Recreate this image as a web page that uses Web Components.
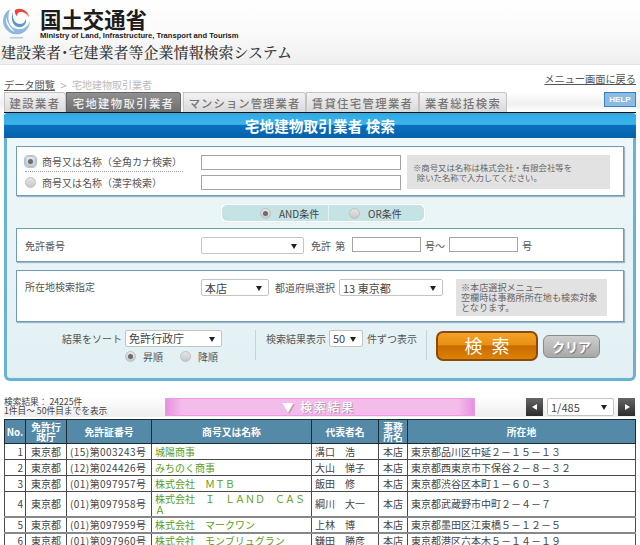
<!DOCTYPE html>
<html lang="ja"><head><meta charset="utf-8"><title>建設業者・宅建業者等企業情報検索システム</title>
<style>
html,body{margin:0;padding:0;background:#fff}
body{width:640px;height:545px;overflow:hidden;font-family:"Noto Sans CJK JP","Noto Sans",sans-serif;font-size:10px;color:#333}
</style></head><body>
<site-header></site-header>
<crumb-bar></crumb-bar>
<tab-bar></tab-bar>
<search-panel>
  <form-box h="48"><name-row></name-row></form-box>
  <cond-switch></cond-switch>
  <form-box h="32" style="margin-bottom:8px"><license-row></license-row></form-box>
  <form-box h="50"><place-row></place-row></form-box>
  <sort-row></sort-row>
</search-panel>
<result-bar></result-bar>
<result-table></result-table>
<script>
const def=(name,css,html)=>customElements.define(name,class extends HTMLElement{
  connectedCallback(){ if(this.shadowRoot)return; const s=this.attachShadow({mode:'open'});
    s.innerHTML='<style>'+css+'</style>'+(typeof html==='function'?html(this):html);}
});
def('x-radio',`:host{display:inline-flex;align-items:center;gap:var(--g,6px)}
 i{display:block;flex:none;width:9px;height:9px;border-radius:50%;background:linear-gradient(#e6e6e6,#c8c8c8);border:1px solid #c0c0c0;position:relative}
 :host([on]) i::after{content:"";position:absolute;left:2px;top:2px;width:5px;height:5px;border-radius:50%;background:#6c6c6c}
 :host([focus]) i{outline:1px solid #a8c4ee;outline-offset:0;border-radius:3px}`,
 `<i></i><span><slot></slot></span>`);
def('x-select',`:host{display:inline-flex;flex:none;align-items:center;box-sizing:border-box;background:#fff;border:1px solid #c4c4c4;border-radius:2px;height:17px;padding:0 6px 0 3px;font-size:11px;color:#444;justify-content:space-between}
 b{font-size:0;border-left:3px solid transparent;border-right:3px solid transparent;border-top:5px solid #222;margin-top:1px}`,
 `<span><slot></slot></span><b></b>`);
def('x-input',`:host{display:block;flex:none;box-sizing:border-box;background:#fff;border:1px solid #a4a4a4;height:15px}`,``);
def('site-header',`:host{display:block;height:65px;background:linear-gradient(#fff 0,#fafafa 50%,#efefef 100%);border-bottom:1px solid #e4e4e4;box-sizing:border-box}
 .top{display:flex;padding:8px 0 0 2px;gap:8px;height:36px;box-sizing:border-box}
 svg{flex:none}
 .n{display:flex;flex-direction:column}
 .ja{font:700 21.4px/22px "Noto Sans CJK JP",sans-serif;color:#1c1c1c}
 .en{font:700 7.6px/9px "Liberation Sans",sans-serif;color:#222;margin-top:1px;white-space:nowrap}
 .t{font:500 15px/20px "Noto Serif CJK JP","Noto Sans CJK JP",serif;color:#333;padding:0 0 0 1px;margin-top:6px;white-space:nowrap}`,
 `<div class="top"><svg width="30" height="32" viewBox="0 0 30 32"><path d="M8 1A13.5 13.5 0 1 0 28 13C26 19 21 22 15 21 8 20 4 12 8 1z" fill="#8fb8de"/><path d="M11 4C10 11 13 16 18 16 21 16 23 14 24 11 25 16 21 20 16 19 11 18 8 11 11 4z" fill="#5a97cf"/><path d="M4 9C3 15 7 22 13 24 9 20 5 15 4 9z" fill="#fff"/><path d="M13 2C18-1 26 2 27 9 24 5 21 3.500 18 4 16 4.500 15 6 15 8 13 7 12.500 4 13 2z" fill="#e5473d"/><path d="M20 4C23 4.500 26 6 27 9 24 6 22 5 20 4z" fill="#f1b3ab"/><rect x="8" y="29" width="13" height="1.500" fill="#b5c9dc"/></svg>
 <div class="n"><div class="ja">国土交通省</div><div class="en">Ministry of Land, Infrastructure, Transport and Tourism</div></div></div>
 <div class="t">建設業者･宅建業者等企業情報検索システム</div>`);
def('crumb-bar',`:host{display:flex;height:27px;padding:0 4px;justify-content:space-between;font-size:10.2px;line-height:13px;color:#555;box-sizing:border-box}
 a{color:#555;text-decoration:underline}
 .l{padding-top:13px;display:flex;color:#bbb}
 .l span:nth-child(2){width:17px;text-align:center;font-size:12px}
 .l span:nth-child(3){font-size:10px}
 .r{padding-top:7px}`,
 `<div class="l"><a>データ閲覧</a><span>&gt;</span><span>宅地建物取引業者</span></div><div class="r"><a>メニュー画面に戻る</a></div>`);
def('tab-bar',`:host{display:flex;height:20px;padding:0 4px;box-sizing:border-box;background:linear-gradient(#fff,#f0f0f0 60%,#fff);align-items:flex-end}
 a{display:flex;align-items:center;justify-content:center;box-sizing:border-box;height:20px;background:linear-gradient(#f3f3f3,#d9d9d9);border:1px solid #c4c4c4;border-bottom:0;border-top-right-radius:3px;color:#777;font-size:11.3px;font-weight:500;letter-spacing:1.4px;white-space:nowrap}
 a.on{background:linear-gradient(#909090,#6f6f6f);color:#f0f0f0;border-color:#666}
 .h{margin-left:auto;align-self:flex-start;width:32px;height:15px;box-sizing:border-box;background:#8bbbe0;border:1px solid #3a7fc8;color:#fff;font:700 8px/13px "Liberation Sans",sans-serif;text-align:center}`,
 `<a style="width:62px">建設業者</a><a class="on" style="width:115px">宅地建物取引業者</a><a style="width:123px;margin-left:2px;letter-spacing:1.1px">マンション管理業者</a><a style="width:113px">賃貸住宅管理業者</a><a style="width:88px">業者総括検索</a><div class="h">HELP</div>`);
def('search-panel',`:host{display:block;margin:0 4px;width:632px;height:269px;box-sizing:border-box;border-top:1px solid #111}
 .t{height:25px;background:linear-gradient(#2fa9e4 0,#3fb4ea 45%,#0a72bf 50%,#0560a8 100%);color:#fff;font-weight:700;font-size:14.5px;line-height:25px;text-align:center;letter-spacing:.2px;border-radius:3px 3px 0 0}
 .b{height:243px;box-sizing:border-box;background:linear-gradient(#eef7fa,#e2f0f4);border:solid #68b3d3;border-width:0 3px 3px 3px;border-radius:0 0 6px 6px;padding:8px 9px 0}`,
 `<div class="t">宅地建物取引業者 検索</div><div class="b"><slot></slot></div>`);
def('form-box',`:host{display:block;background:#fff;border:1px solid #6f9db5;box-shadow:1px 1px 1px #9fb7c4}`,
 h=>`<style>:host{height:${h.getAttribute('h')}px}</style><slot></slot>`);
def('name-row',`:host{display:flex;height:100%;padding-left:8px;color:#555;font-size:10px}
 .c{width:176px;padding-top:4px}
 .r{height:20px;display:flex;align-items:center}
 .d{border-bottom:1px dotted #999;width:158px}
 .i{display:flex;flex-direction:column;gap:5px;padding-top:8px}
 x-input{width:200px}
 .n{margin:8px 0 0 6px;width:203px;height:34px;background:#e2e2e2;font-size:8.4px;line-height:10px;padding:7px 0 0 6px;box-sizing:border-box;color:#666;white-space:nowrap}`,
 `<div class="c"><div class="r"><x-radio on focus>商号又は名称（全角カナ検索）</x-radio></div><div class="d"></div><div class="r"><x-radio>商号又は名称（漢字検索）</x-radio></div></div>
 <div class="i"><x-input></x-input><x-input></x-input></div>
 <div class="n">※商号又は名称は株式会社・有限会社等を<br>&nbsp;&nbsp;除いた名称で入力してください。</div>`);
def('cond-switch',`:host{display:block;width:206px;height:20px;margin:7px 0 5px 204px;box-sizing:border-box;padding:1px;background:#fff;border-radius:6px;border:1px solid #e8f2f5}
 .i{display:flex;height:100%;background:#c5e2e5;border-radius:5px;color:#444;font-size:10px;--g:8px}
 .i>div{display:flex;align-items:center;box-sizing:border-box}
 .i>div:first-child{width:106px;padding-left:38px}
 .i>div+div{flex:1;border-left:1px solid #e4f0f2;padding-left:20px}`,
 `<div class="i"><div><x-radio on>AND条件</x-radio></div><div><x-radio>OR条件</x-radio></div></div>`);
def('license-row',`:host{display:flex;height:100%;box-sizing:border-box;padding:8px 0 0 8px;color:#555;font-size:10px;line-height:17px;white-space:nowrap}
 .l{width:176px}
 x-input{width:69px}
 x-select{width:103px}
 .a{margin-left:7px;width:41px;word-spacing:2px}
 .g{margin:0 4px;width:20px}`,
 `<div class="l">免許番号</div><x-select></x-select><span class="a">免許 第</span><x-input></x-input><span class="g">号～</span><x-input></x-input><span class="g">号</span>`);
def('place-row',`:host{display:flex;height:100%;padding-left:8px;color:#555;font-size:10px;white-space:nowrap}
 .l{width:176px;padding-top:8px;line-height:16px}
 .a{display:flex;align-items:flex-start;padding-top:8px}
 .a span{margin:0 4px 0 6px;line-height:17px}
 .n{margin:8px 0 0 13px;width:151px;height:37px;background:#e2e2e2;font-size:9.1px;line-height:10px;padding:3px 0 0 5px;box-sizing:border-box;color:#666;white-space:nowrap}`,
 `<div class="l">所在地検索指定</div><div class="a"><x-select style="width:68px">本店</x-select><span>都道府県選択</span><x-select style="width:104px">13 東京都</x-select></div>
 <div class="n">※本店選択メニュー<br>空欄時は事務所所在地も検索対象<br>となります。</div>`);
def('sort-row',`:host{display:flex;height:42px;margin-top:8px;color:#555;font-size:10px;white-space:nowrap}
 .s{flex:none;width:240px;box-sizing:border-box;padding-left:46px;border-right:1px solid #c3d3d8;height:30px}
 .s1{display:flex;gap:3px;align-items:center;line-height:17px}
 .s2{display:flex;gap:17px;padding:1px 0 0 63px;--g:7px;line-height:17px}
 .m{flex:none;display:flex;gap:3px;align-items:flex-start;width:171px;box-sizing:border-box;padding-left:10px;border-right:1px solid #c3d3d8;height:30px;line-height:17px}
 .go{flex:none;width:102px;height:30px;box-sizing:border-box;margin:1px 0 0 9px;background:linear-gradient(#f4a02a,#e8900f 45%,#c86a00 50%,#de8200);border:2px solid #8a4a08;border-radius:7px;color:#fff;font-size:18px;line-height:25px;text-align:center;letter-spacing:9px;padding-left:9px;font-weight:400}
 .cl{flex:none;width:57px;height:23px;box-sizing:border-box;margin:5px 0 0 5px;background:linear-gradient(#cfcfcf,#a8a8a8);border:1px solid #8a8a8a;border-radius:6px;color:#fff;font-size:13px;line-height:21px;text-align:center;font-weight:700;text-shadow:1px 1px 1px #777}`,
 `<div class="s"><div class="s1">結果をソート<x-select style="width:97px">免許行政庁</x-select></div><div class="s2"><x-radio on>昇順</x-radio><x-radio>降順</x-radio></div></div>
 <div class="m"><span>検索結果表示</span><x-select style="width:34px">50</x-select><span style="margin-left:1px">件ずつ表示</span></div>
 <div class="go">検索</div><div class="cl">クリア</div>`);
def('result-bar',`:host{display:flex;height:21px;margin:15px 4px 0;width:632px;box-sizing:border-box;background:linear-gradient(#fff,#eee);color:#444}
 .c{flex:none;width:161px;font-size:8.7px;line-height:9px;padding-top:1px;white-space:nowrap}
 .p{flex:none;width:310px;height:18px;margin-top:2px;box-sizing:border-box;background:linear-gradient(90deg,#e98fe0,#f3bcea 5%,#f3bcea 95%,#e98fe0);border:1px solid #ee9be6;color:#fff;font-size:12px;font-weight:500;line-height:16px;text-align:center;letter-spacing:1.7px;text-shadow:1px 1px 1px #a78aa5;padding-right:3px}
 .n{margin-left:auto;display:flex;gap:4px;margin-right:1px;margin-top:2px}
 .bt{width:17px;height:18px;background:linear-gradient(#666,#2c2c2c);display:flex;align-items:center;justify-content:center}
 .bt i{display:block;border:3px solid transparent}
 x-select{width:67px;height:18px}`,
 `<div class="c">検索結果： 24225件<br>1件目～ 50件目までを表示</div><div class="p">▼ 検索結果</div>
 <div class="n"><div class="bt"><i style="border-right:5px solid #fff;margin-left:-4px"></i></div><x-select>1/485</x-select><div class="bt"><i style="border-left:5px solid #fff;margin-right:-4px"></i></div></div>`);
const rows=[
 [1,'(15)第003243号','城陽商事','溝口　浩','東京都品川区中延２－１５－１３',16],
 [2,'(12)第024426号','みちのく商事','大山　悌子','東京都西東京市下保谷２－８－３２',16],
 [3,'(01)第097957号','株式会社　ＭＴＢ','飯田　修','東京都渋谷区本町１－６０－３',16],
 [4,'(01)第097958号','株式会社　Ｉ　ＬＡＮＤ　ＣＡＳＡ','綱川　大一','東京都武蔵野市中町２－４－７',25],
 [5,'(01)第097959号','株式会社　マークワン','上林　博','東京都墨田区江東橋５－１２－５',16],
 [6,'(01)第097960号','株式会社　モンブリュグラン','鎌田　勝彦','東京都港区六本木５－１４－１９',15]];
def('result-table',`:host{display:block;margin:2px 4px 0;width:632px}
 table{border-collapse:collapse;table-layout:fixed;width:632px;font-size:10px;color:#444;border:1px solid #222}
 th,td{border:1px solid #4a4a4a;padding:0 3px;overflow:hidden;white-space:nowrap;box-sizing:border-box}
 th{background:#5489a8;color:#fff;font-size:9.8px;font-weight:700;height:24px;line-height:10px;border-color:#1c2a33;white-space:normal;padding:0 3px}
 td{line-height:11px}
 td.r{text-align:right;padding-right:2px}
 td.c{text-align:center;padding:0}
 td.l{letter-spacing:.45px}
 td.g{color:#5c9c22;white-space:normal;word-break:break-all}
 tr.k td{border-top:2px solid #888}`,
 `<table><colgroup><col style="width:21px"><col style="width:41px"><col style="width:85px"><col style="width:160px"><col style="width:67px"><col style="width:29px"><col></colgroup>
 <tr><th style="padding:0">No.</th><th>免許行政庁</th><th>免許証番号</th><th>商号又は名称</th><th>代表者名</th><th>事務<br>所名</th><th>所在地</th></tr>`+
 rows.map(r=>`<tr class="${r[0]>4?'k':''}" style="height:${r[5]}px"><td class="r">${r[0]}</td><td class="c">東京都</td><td class="l">${r[1]}</td><td class="g">${r[2]}</td><td>${r[3]}</td><td class="c">本店</td><td>${r[4]}</td></tr>`).join('')+`</table>`);
</script>
</body></html>
